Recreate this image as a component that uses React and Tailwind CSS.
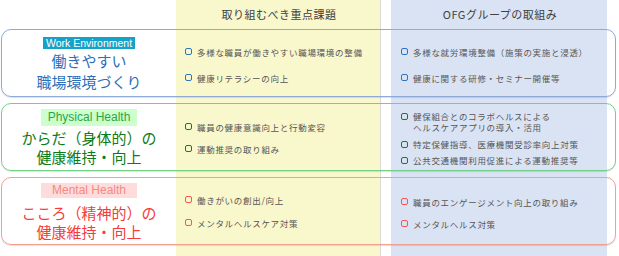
import React from 'react';

const jp = { fontFamily: '"Noto Sans CJK JP", "Noto Sans", sans-serif' };
const en = { fontFamily: '"Liberation Sans", Arial, sans-serif' };

function Item({ color, children }) {
  return (
    <div className="flex items-start">
      <span className={`mt-[2px] mr-[5px] w-[7px] h-[7px] shrink-0 rounded-[2px] border-[1.5px] ${color}`} />
      <span>{children}</span>
    </div>
  );
}

const rows = [
  {
    border: 'border-[#8eaad8]',
    bullet: 'border-[#2e74c0]',
    label: 'Work Environment',
    labelCls: 'w-[92px] h-[12px] text-[10.5px] leading-[12px] bg-[#16a2c8] text-white mt-[7px]',
    titleCls: 'text-[#2b6fb8] leading-[21px] mt-[1px]',
    title: ['働きやすい', '職場環境づくり'],
    mid: ['多様な職員が働きやすい職場環境の整備', '健康リテラシーの向上'],
    midCls: 'pt-[16px] gap-[14px] leading-[12px]',
    right: [['多様な就労環境整備（施策の実施と浸透）'], ['健康に関する研修・セミナー開催等']],
    rightCls: 'pt-[16px] gap-[14px] leading-[12px]',
  },
  {
    border: 'border-[#72d089]',
    bullet: 'border-[#1b7a23]',
    label: 'Physical Health',
    labelCls: 'w-[96px] h-[17px] text-[12px] leading-[17px] bg-[#ccffcc] text-[#2aa64a] mt-[5px]',
    titleCls: 'text-[#0b7b17] leading-[19px] mt-[2px]',
    title: ['からだ（身体的）の', '健康維持・向上'],
    mid: ['職員の健康意識向上と行動変容', '運動推奨の取り組み'],
    midCls: 'pt-[17px] gap-[10px] leading-[12px]',
    right: [
      ['健保組合とのコラボヘルスによる', 'ヘルスケアアプリの導入・活用'],
      ['特定保健指導、医療機関受診率向上対策'],
      ['公共交通機関利用促進による運動推奨等'],
    ],
    rightCls: 'pt-[7px] gap-[5.5px] leading-[11px]',
  },
  {
    border: 'border-[#f2a090]',
    bullet: 'border-[#ff5252]',
    label: 'Mental Health',
    labelCls: 'w-[96px] h-[15px] text-[12px] leading-[15px] bg-[#ffdcdc] text-[#f48a80] mt-[5px]',
    titleCls: 'text-[#f53c3c] leading-[19px] mt-[5px]',
    title: ['こころ（精神的）の', '健康維持・向上'],
    mid: ['働きがいの創出/向上', 'メンタルヘルスケア対策'],
    midCls: 'pt-[16px] gap-[11px] leading-[12px]',
    right: [['職員のエンゲージメント向上の取り組み'], ['メンタルヘルス対策']],
    rightCls: 'pt-[18px] gap-[10px] leading-[12px]',
  },
];

export default function App() {
  return (
    <div className="relative w-[619px] h-[256px] bg-white overflow-hidden" style={jp}>
      {/* column backgrounds */}
      <div className="absolute inset-0 flex">
        <div className="w-[176px]" />
        <div className="w-[205px] bg-[#f9f7cc] border-r border-[#dcdcd6]" />
        <div className="w-[10px]" />
        <div className="w-[216px] bg-[#dae3f3]" />
      </div>

      <div className="relative">
        <div className="flex h-[29px] items-center text-[11px] tracking-[0.5px] text-[#404040]">
          <div className="w-[176px]" />
          <div className="w-[206px] text-center">取り組むべき重点課題</div>
          <div className="w-[10px]" />
          <div className="w-[216px] text-center">OFGグループの取組み</div>
        </div>

        <div className="flex flex-col gap-[6px] pl-[1px]">
          {rows.map((r) => (
            <div
              key={r.label}
              className={`w-[615px] h-[68px] border rounded-[10px] grid grid-cols-[174px_206px_10px_1fr] shadow-[0_1px_1px_rgba(0,0,0,0.12)] ${r.border}`}
            >
              <div className="flex flex-col items-center">
                <div className={`text-center ${r.labelCls}`} style={en}>{r.label}</div>
                <div className={`text-[15px] text-center ${r.titleCls}`}>
                  {r.title.map((t) => (
                    <div key={t}>{t}</div>
                  ))}
                </div>
              </div>
              <div className={`flex flex-col pl-[9px] text-[8.5px] tracking-[0.7px] text-[#555] ${r.midCls}`}>
                {r.mid.map((t) => (
                  <Item key={t} color={r.bullet}>{t}</Item>
                ))}
              </div>
              <div />
              <div className={`flex flex-col pl-[9px] text-[8.5px] tracking-[0.7px] text-[#555] ${r.rightCls}`}>
                {r.right.map((lines) => (
                  <Item key={lines[0]} color={r.bullet}>
                    {lines.map((l) => (
                      <div key={l}>{l}</div>
                    ))}
                  </Item>
                ))}
              </div>
            </div>
          ))}
        </div>
      </div>
    </div>
  );
}
